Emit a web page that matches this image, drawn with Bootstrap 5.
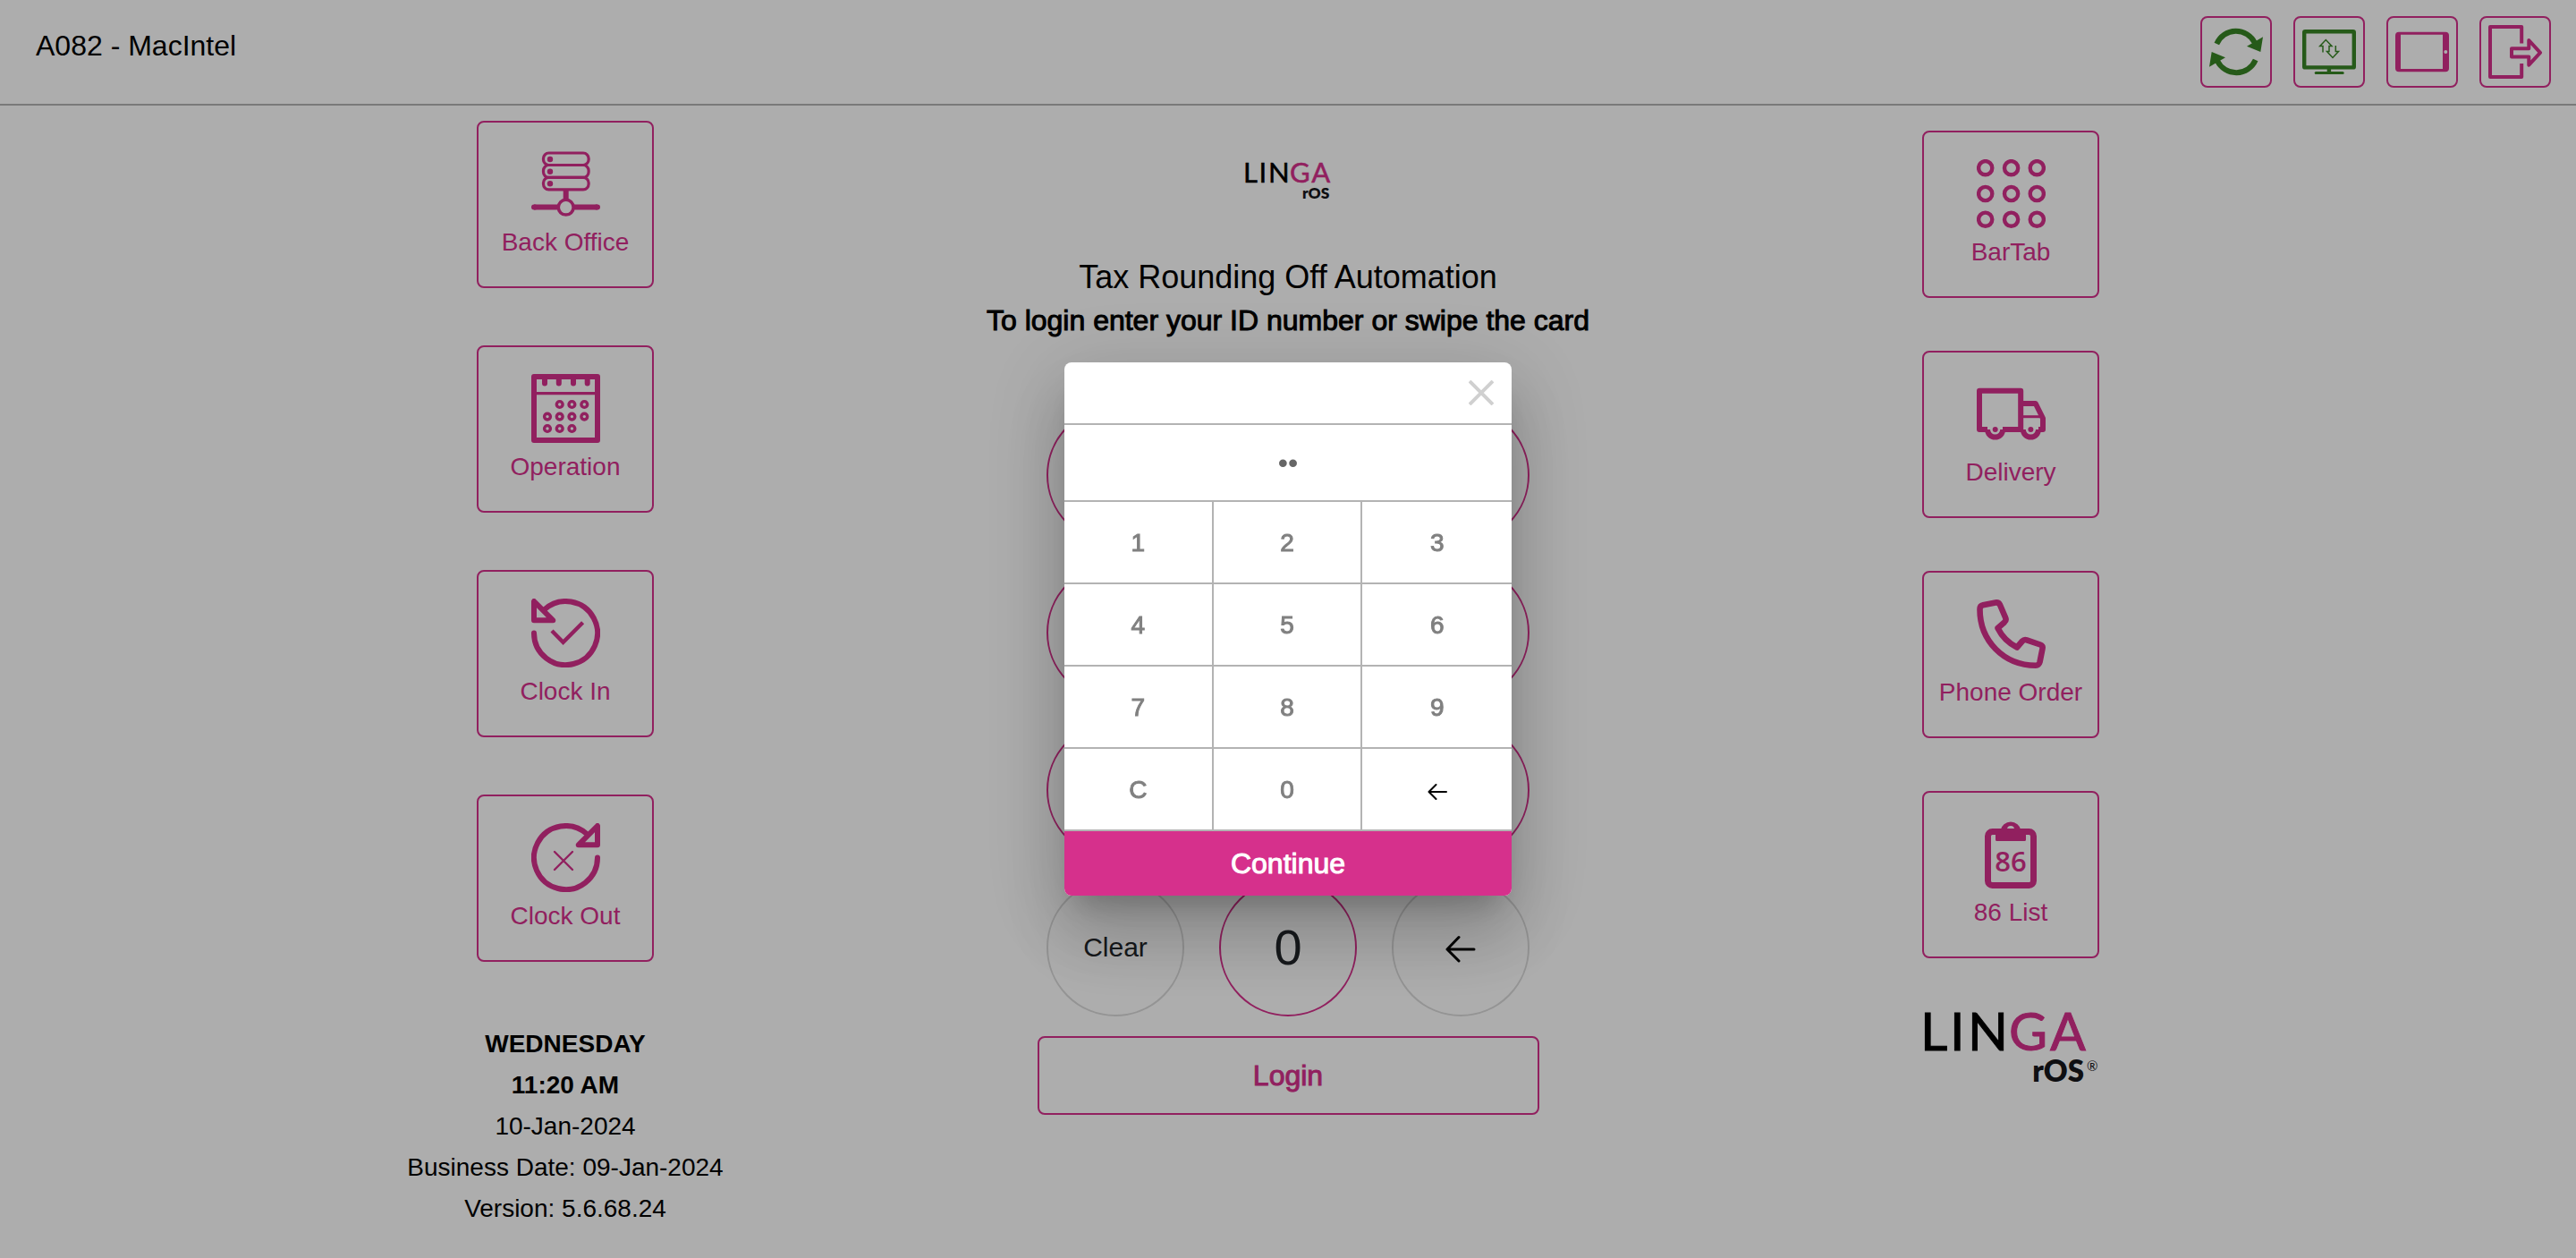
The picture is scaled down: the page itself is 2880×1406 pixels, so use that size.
<!DOCTYPE html>
<html lang="en">
<head>
<meta charset="utf-8">
<meta name="viewport" content="width=device-width, initial-scale=1">
<title>Linga rOS - Login</title>
<link rel="stylesheet" href="https://cdn.jsdelivr.net/npm/bootstrap@5.3.0/dist/css/bootstrap.min.css">
<style>
  :root { --brand: #d6308c; --ok: #388525; --rule: #b3b3b3; }
  body { font-family: "Liberation Sans", Arial, sans-serif; font-size: 28px; color: #000; background: #fff; }
  svg { display: block; flex: none; }
  .medium { -webkit-text-stroke: 1px currentColor; }
  .topbar { padding: 18px 28px; border-bottom: 2px solid var(--rule); }
  .station { font-size: 32px; line-height: 48px; padding: 9px 12px 0; }
  .tool { width: 80px; height: 80px; padding: 8px; border: 2px solid var(--brand); border-radius: 8px; background: none; color: var(--brand); }
  .tool-ok { color: var(--ok); }
  .board { padding: 0 228px; }
  .side-left { padding-top: 17px; }
  .side-right { padding-top: 28px; }
  .tiles-left { gap: 64px; }
  .tiles-right { gap: 59px; }
  .tile { width: 198px; height: 187px; padding: 30px 0 0; gap: 6px; border: 2px solid var(--brand); border-radius: 8px; color: var(--brand); background: none; line-height: 42px; text-decoration: none; }
  .clockinfo { margin-top: 69px; line-height: 46px; }
  .brand-large { margin-top: 43px; }
  .brand-small { margin: 54px 0 59px; }
  .store { font-size: 36px; line-height: 48px; font-weight: 400; }
  .hint { font-size: 32px; line-height: 48px; }
  .pad { display: grid; grid-template-columns: repeat(3, 154px); gap: 22px 39px; margin: 72px 0 22px; }
  .key { height: 154px; padding: 0; border: 2px solid var(--brand); border-radius: 50%; background: none; color: #212529; font-size: 56px; line-height: 1; }
  .key-plain { border-color: #dadada; font-size: 30px; }
  .login { width: 561px; height: 88px; border: 2px solid var(--brand); border-radius: 8px; background: none; color: var(--brand); font-size: 32px; }
  .modal-backdrop { --bs-backdrop-opacity: .32; }
  .pin { max-width: 500px; border: 0; border-radius: 8px; overflow: hidden; box-shadow: 0 22px 30px -14px rgba(0,0,0,.2), 0 48px 76px 6px rgba(0,0,0,.14), 0 18px 92px 16px rgba(0,0,0,.12); }
  .pin-head { height: 70px; padding: 0 20px; border-bottom: 2px solid var(--rule); }
  .pin-close { padding: 0; border: 0; background: none; color: #d0d0d0; }
  .pin-input { height: 86px; padding: 0; border: 0; border-bottom: 2px solid var(--rule); text-align: center; font-size: 32px; color: #666; outline: 0; }
  .pin-grid { display: grid; grid-template-columns: repeat(3, 1fr); }
  .pin-key { height: 92px; padding: 2px 0 0; border: 0 solid var(--rule); border-width: 0 2px 2px 0; background: #fff; color: #808080; font-size: 28px; }
  .pin-key:nth-child(3n) { border-right-width: 0; }
  .pin-go { height: 72px; border: 0; background: var(--brand); color: #fff; font-size: 32px; }
</style>
<script src="https://cdn.jsdelivr.net/npm/bootstrap@5.3.0/dist/js/bootstrap.bundle.min.js"></script>
</head>
<body>

<header class="topbar d-flex justify-content-between align-items-start">
  <div class="station">A082 - MacIntel</div>
  <div class="d-flex gap-4">
    <button type="button" class="tool tool-ok" aria-label="Refresh">
      <svg width="60" height="60" viewBox="0 0 60 60" fill="currentColor">
        <path d="M8.3 21A23.5 23.5 0 0 1 51 20M51.7 39A23.5 23.5 0 0 1 9 40" fill="none" stroke="currentColor" stroke-width="6"/>
        <path d="M60 13.3 57.3 30 42 23.7zM0 46.7 2.7 30 18 36.3z"/>
      </svg>
    </button>
    <button type="button" class="tool tool-ok" aria-label="Sync">
      <svg width="60" height="60" viewBox="0 0 60 60" fill="none" stroke="currentColor">
        <rect x="2.2" y="7.2" width="55.6" height="40.2" rx="1" stroke-width="4.4"/>
        <path d="M29.9 49v4" stroke-width="4.4"/>
        <path d="M15.2 53.5h30" stroke-width="3" stroke-linecap="round"/>
        <path d="M23 30.5V23.5H19.7L26.3 16.5 33 23.5H30V29.5H27.5L34 36.5 40.5 29.5H37.3V23" stroke-width="1.5"/>
      </svg>
    </button>
    <button type="button" class="tool" aria-label="Tablet">
      <svg width="60" height="60" viewBox="0 0 60 60" fill="currentColor">
        <path fill-rule="evenodd" d="M4 7.7H56a4 4 0 0 1 4 4V48.3a4 4 0 0 1-4 4H4a4 4 0 0 1-4-4V11.7a4 4 0 0 1 4-4zM6 10.8V49H53V10.8zM54.3 30a2 2 0 1 0 4 0a2 2 0 1 0-4 0z"/>
      </svg>
    </button>
    <button type="button" class="tool" aria-label="Exit">
      <svg width="60" height="60" viewBox="0 0 60 60" fill="none" stroke="currentColor" stroke-width="4" stroke-linejoin="round">
        <path d="M37.2 20.5V2H2V58H37.2V43"/>
        <path d="M26 26.2H45.3V17L58 30.8 45.3 44.7V35.5H26z"/>
      </svg>
    </button>
  </div>
</header>

<main class="board">
  <div class="row g-0">
    <div class="col-4 side-left d-flex flex-column align-items-center">
      <nav class="tiles-left d-flex flex-column" aria-label="Back office">
        <a href="#" class="tile d-flex flex-column align-items-center">
          <svg width="77" height="77" viewBox="0 0 77 77" fill="none" stroke="currentColor" stroke-width="3.2">
            <rect x="13.5" y="4" width="50.6" height="13.5" rx="6"/>
            <rect x="13.5" y="17.5" width="50.6" height="13.8" rx="6"/>
            <rect x="13.5" y="31.3" width="50.6" height="13.5" rx="6"/>
            <g fill="currentColor" stroke="none"><circle cx="21" cy="11" r="3.2"/><circle cx="21" cy="24.7" r="3.2"/><circle cx="21" cy="38.3" r="3.2"/></g>
            <path d="M38.7 46v9M3 64.5h26M48 64.5h26" stroke-width="6"/>
            <path d="M3 64.5h1M73 64.5h1" stroke-width="6" stroke-linecap="round"/>
            <circle cx="38.7" cy="64.7" r="8.4" stroke-width="3.5"/>
          </svg>
          <span>Back Office</span>
        </a>
        <a href="#" class="tile d-flex flex-column align-items-center">
          <svg width="77" height="77" viewBox="0 0 77 77" fill="none" stroke="currentColor">
            <rect x="3" y="3" width="71" height="71" stroke-width="6" stroke-linejoin="round"/>
            <path d="M3 21.7h71" stroke-width="3.2"/>
            <path d="M15 5v5.5M30.8 5v5.5M47 5v5.5M62.7 5v5.5" stroke-width="6" stroke-linecap="round"/>
            <g stroke-width="3.4">
              <circle cx="31.7" cy="34" r="3.4"/><circle cx="45.4" cy="34" r="3.4"/><circle cx="59.3" cy="34" r="3.4"/>
              <circle cx="18" cy="47.6" r="3.4"/><circle cx="31.7" cy="47.6" r="3.4"/><circle cx="45.4" cy="47.6" r="3.4"/><circle cx="59.3" cy="47.6" r="3.4"/>
              <circle cx="18" cy="61" r="3.4"/><circle cx="31.7" cy="61" r="3.4"/><circle cx="45.4" cy="61" r="3.4"/>
            </g>
          </svg>
          <span>Operation</span>
        </a>
        <a href="#" class="tile d-flex flex-column align-items-center">
          <svg width="77" height="77" viewBox="0 0 77 77" fill="none" stroke="currentColor" stroke-width="6" stroke-linecap="round" stroke-linejoin="round">
            <path d="M3 38.5A35.5 35.5 0 1 0 14.5 12.4"/>
            <path d="M3 3V24.3H24.3z"/>
            <path d="M23 36 35.6 48.8 57.6 26.8" stroke-width="4.4" stroke-linecap="butt" stroke-linejoin="miter"/>
          </svg>
          <span>Clock In</span>
        </a>
        <a href="#" class="tile d-flex flex-column align-items-center">
          <svg width="77" height="77" viewBox="0 0 77 77" fill="none" stroke="currentColor" stroke-width="6" stroke-linecap="round" stroke-linejoin="round">
            <path d="M74 38.5A35.5 35.5 0 1 1 62.5 12.4"/>
            <path d="M74 3V24.3H52.7z"/>
            <path d="M26 32 46 52M46 32 26 52" stroke-width="2.4"/>
          </svg>
          <span>Clock Out</span>
        </a>
      </nav>
      <div class="clockinfo text-center">
        <div class="fw-bold">WEDNESDAY</div>
        <div class="fw-bold">11:20 AM</div>
        <div>10-Jan-2024</div>
        <div>Business Date: 09-Jan-2024</div>
        <div>Version: 5.6.68.24</div>
      </div>
    </div>

    <div class="col-4 d-flex flex-column align-items-center">
      <svg class="brand-small" width="102" height="55" viewBox="-5 -18 194 104" role="img" aria-label="LINGA rOS" font-family="Lato, sans-serif" font-size="59">
        <g stroke="#000"><text x="-3" y="42">L</text><text x="30" y="42">I</text><text x="50" y="42">N</text></g>
        <g fill="#d6308c" stroke="#d6308c"><text x="96" y="42">G</text><text x="142" y="42">A</text></g>
        <text x="180" y="77" font-size="33" font-weight="800" text-anchor="end" fill="#17171b">rOS</text>
      </svg>
      <h1 class="store mb-0">Tax Rounding Off Automation</h1>
      <p class="hint medium mb-0">To login enter your ID number or swipe the card</p>
      <div class="pad">
        <button type="button" class="key">1</button>
        <button type="button" class="key">2</button>
        <button type="button" class="key">3</button>
        <button type="button" class="key">4</button>
        <button type="button" class="key">5</button>
        <button type="button" class="key">6</button>
        <button type="button" class="key">7</button>
        <button type="button" class="key">8</button>
        <button type="button" class="key">9</button>
        <button type="button" class="key key-plain">Clear</button>
        <button type="button" class="key">0</button>
        <button type="button" class="key key-plain d-flex justify-content-center align-items-center" aria-label="Delete">
          <svg width="34" height="34" viewBox="0 0 34 34" fill="none" stroke="#000" stroke-width="3" stroke-linecap="round" stroke-linejoin="round"><path d="M32 19H2M15 5.5 2 19 15 32"/></svg>
        </button>
      </div>
      <button type="button" class="login medium">Login</button>
    </div>

    <div class="col-4 side-right d-flex flex-column align-items-center">
      <nav class="tiles-right d-flex flex-column" aria-label="Orders">
        <a href="#" class="tile d-flex flex-column align-items-center">
          <svg width="77" height="77" viewBox="0 0 77 77" fill="none" stroke="currentColor" stroke-width="4.4">
            <circle cx="9.7" cy="9.7" r="7.6"/><circle cx="38.6" cy="9.7" r="7.6"/><circle cx="67.3" cy="9.7" r="7.6"/>
            <circle cx="9.7" cy="38.5" r="7.6"/><circle cx="38.6" cy="38.5" r="7.6"/><circle cx="67.3" cy="38.5" r="7.6"/>
            <circle cx="9.7" cy="67.2" r="7.6"/><circle cx="38.6" cy="67.2" r="7.6"/><circle cx="67.3" cy="67.2" r="7.6"/>
          </svg>
          <span>BarTab</span>
        </a>
        <a href="#" class="tile d-flex flex-column align-items-center">
          <svg width="77" height="77" viewBox="0 0 77 77" fill="none" stroke="currentColor" stroke-width="6" stroke-linejoin="round">
            <path d="M12 56H3V12.7H49.2V56M29 56H52"/>
            <path d="M49 27H65.8L74 43.5V56H69"/>
            <path d="M12 56a8.6 8.6 0 0 0 17.2 0M51.8 56a8.6 8.6 0 0 0 17.2 0"/>
            <path d="M50 41.7H74" stroke-width="3"/>
            <g fill="currentColor" stroke="none"><circle cx="20.7" cy="56" r="3"/><circle cx="60.4" cy="56" r="3"/></g>
          </svg>
          <span>Delivery</span>
        </a>
        <a href="#" class="tile d-flex flex-column align-items-center">
          <svg width="77" height="77" viewBox="0 0 77 77" fill="none" stroke="currentColor" stroke-width="6.6" stroke-linejoin="round">
            <path d="M7 6.3 21 3.5Q24.5 3 26 6L32 20Q33.5 23.5 31 25.5L23.5 32C28 41 36 49 45 53.5L51 46.5Q53 44.3 56 45.3L71 50.5Q74.3 51.7 73.5 55L70.5 70Q69.5 73.7 66 73.7C30 73.7 3.5 46 3.5 11Q3.5 7 7 6.3z"/>
          </svg>
          <span>Phone Order</span>
        </a>
        <a href="#" class="tile d-flex flex-column align-items-center">
          <svg width="77" height="77" viewBox="0 0 77 77" fill="currentColor">
            <rect x="12.500" y="13.5" width="51" height="60" rx="5" fill="none" stroke="currentColor" stroke-width="7"/>
            <path fill-rule="evenodd" d="M21 12H26.5A11.7 11.7 0 0 1 49.5 12H55V22.5Q55 24 53.5 24H22.5Q21 24 21 22.5zM34 11a4 4 0 1 0 8 0a4 4 0 1 0-8 0z"/>
            <text x="38" y="58" text-anchor="middle" font-family="Open Sans, sans-serif" font-weight="600" font-size="31">86</text>
          </svg>
          <span>86 List</span>
        </a>
      </nav>
      <svg class="brand-large" width="206" height="104" viewBox="-5 -18 206 104" role="img" aria-label="LINGA rOS" font-family="Lato, sans-serif" font-size="59">
        <g stroke="#000"><text x="-3" y="42">L</text><text x="30" y="42">I</text><text x="50" y="42">N</text></g>
        <g fill="#d6308c" stroke="#d6308c"><text x="96" y="42">G</text><text x="142" y="42">A</text></g>
        <text x="180" y="77" font-size="33" font-weight="800" text-anchor="end" fill="#17171b">rOS</text>
        <text x="183" y="65" font-size="15" fill="#17171b">®</text>
      </svg>
    </div>
  </div>
</main>

<div class="modal-backdrop show"></div>
<div class="modal d-block" tabindex="-1" role="dialog" aria-label="Enter PIN">
  <div class="modal-dialog modal-dialog-centered mw-100 justify-content-center">
    <form class="modal-content pin">
      <div class="pin-head d-flex justify-content-end align-items-center">
        <button type="button" class="pin-close" aria-label="Close">
          <svg width="28" height="28" viewBox="0 0 28 28" fill="none" stroke="currentColor" stroke-width="4"><path d="M1 1 27 27M27 1 1 27"/></svg>
        </button>
      </div>
      <input class="pin-input w-100" type="password" value="12" aria-label="PIN">
      <div class="pin-grid">
        <button type="button" class="pin-key medium">1</button>
        <button type="button" class="pin-key medium">2</button>
        <button type="button" class="pin-key medium">3</button>
        <button type="button" class="pin-key medium">4</button>
        <button type="button" class="pin-key medium">5</button>
        <button type="button" class="pin-key medium">6</button>
        <button type="button" class="pin-key medium">7</button>
        <button type="button" class="pin-key medium">8</button>
        <button type="button" class="pin-key medium">9</button>
        <button type="button" class="pin-key medium">C</button>
        <button type="button" class="pin-key medium">0</button>
        <button type="button" class="pin-key d-flex justify-content-center align-items-center" aria-label="Delete">
          <svg width="22" height="22" viewBox="0 0 22 22" fill="none" stroke="#000" stroke-width="2" stroke-linecap="round" stroke-linejoin="round"><path d="M21 13H1.5M9.500 5 1.5 13 9.500 21"/></svg>
        </button>
      </div>
      <button type="button" class="pin-go medium">Continue</button>
    </form>
  </div>
</div>
</body>
</html>
